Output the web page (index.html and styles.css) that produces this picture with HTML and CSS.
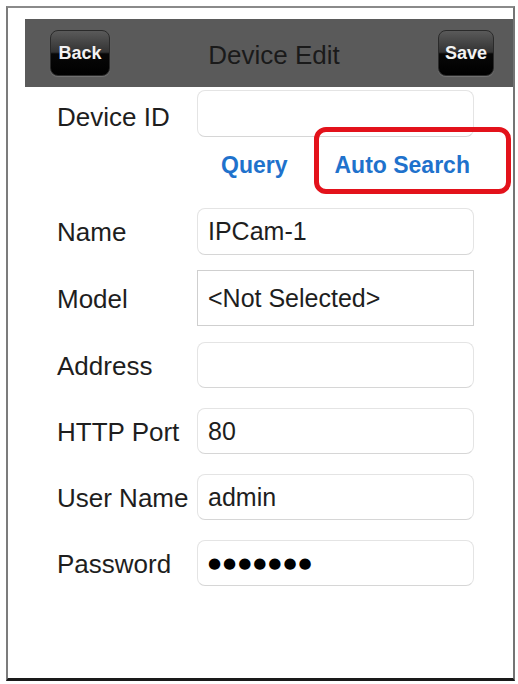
FILE: index.html
```html
<!DOCTYPE html>
<html lang="en">
<head>
  <meta charset="UTF-8">
  <meta name="viewport" content="width=device-width, initial-scale=1.0">
  <title>Device Edit</title>
  <link rel="stylesheet" href="styles.css">
</head>
<body>
  <div class="frame">
    <!-- top bar -->
    <div class="navbar">
      <button class="nav-btn">Back</button>
      <span class="nav-title">Device Edit</span>
      <button class="nav-btn">Save</button>
    </div>

    <div class="form">
      <div class="row row-first">
        <label for="devid">Device ID</label>
        <input class="field" id="devid" type="text" value="">
      </div>

      <div class="actions">
        <a class="link" href="#">Query</a>
        <a class="link link-marked" href="#">Auto Search</a>
      </div>

      <div class="row row-name">
        <label for="name">Name</label>
        <input class="field" id="name" type="text" value="IPCam-1">
      </div>
      <div class="row row-model">
        <label for="model">Model</label>
        <div class="field field-select" id="model">&lt;Not Selected&gt;</div>
      </div>
      <div class="row">
        <label for="addr">Address</label>
        <input class="field" id="addr" type="text" value="">
      </div>
      <div class="row">
        <label for="port">HTTP Port</label>
        <input class="field" id="port" type="text" value="80">
      </div>
      <div class="row">
        <label for="user">User Name</label>
        <input class="field" id="user" type="text" value="admin">
      </div>
      <div class="row">
        <label for="pass">Password</label>
        <div class="field field-pass" id="pass">●●●●●●●</div>
      </div>
    </div>
  </div>
</body>
</html>
```

FILE: styles.css
```css
* {
  box-sizing: border-box;
}
body {
  margin: 0;
  background-color: #fff;
  font-family: "Liberation Sans", Arial, sans-serif;
  color: #1e1e1e;
}
.frame {
  margin: 6px 3px 0 6px;
  height: 675px;
  border-top: 2px solid #8a8a8a;
  border-left: 2px solid #7c7c7c;
  border-right: 2px solid #747474;
  border-bottom: 3px solid #1a1a1a;
  background-color: #fff;
}
.navbar {
  margin: 11px 0 0 17px;
  height: 68px;
  background-color: #5a5a5a;
  display: flex;
  align-items: center;
  justify-content: space-between;
  padding: 0 19px 0 25px;
}
.nav-btn {
  height: 46px;
  padding: 0 6px;
  min-width: 53px;
  border: 1px solid #2a2a2a;
  border-radius: 8px;
  background: linear-gradient(#5a5a5a 0%, #333 48%, #080808 52%, #000 100%);
  color: #f2f2f2;
  font-family: "Liberation Sans", Arial, sans-serif;
  font-size: 18px;
  font-weight: bold;
  box-shadow: 0 1px 1px rgba(255, 255, 255, 0.15);
}
.nav-btn:first-child {
  width: 60px;
}
.nav-title {
  margin-top: 5px;
  font-size: 26px;
  color: #1a1a1a;
}
.form {
  padding-left: 49px;
}
.row {
  display: flex;
  align-items: center;
  height: 46px;
  margin-top: 20px;
}
.row-first {
  margin-top: 3px;
  height: 47px;
}
.row-first label {
  padding-top: 8px;
}
.row-name {
  margin-top: 0;
  height: 47px;
}
.row-model {
  margin-top: 15px;
  height: 56px;
  margin-bottom: -4px;
}
label {
  width: 140px;
  padding-top: 2px;
  font-size: 26px;
  color: #1e1e1e;
  flex: none;
}
.field {
  width: 277px;
  height: 100%;
  padding: 0 10px;
  border: 1px solid #e4e4e4;
  border-bottom-color: #d6d6d6;
  border-radius: 8px;
  background-color: #fff;
  font-family: "Liberation Sans", Arial, sans-serif;
  font-size: 25px;
  color: #1e1e1e;
  outline: none;
  display: flex;
  align-items: center;
}
.field-select {
  border: 1px solid #cfcfcf;
  border-radius: 0;
}
.field-pass {
  font-family: "DejaVu Sans", sans-serif;
  font-size: 15px;
  letter-spacing: 2px;
  color: #000;
}
.actions {
  height: 71px;
  padding: 14px 0 0 164px;
  display: flex;
  align-items: flex-start;
  gap: 47px;
  line-height: 28px;
}
.link {
  color: #1f72cc;
  font-size: 23px;
  font-weight: bold;
  text-decoration: none;
}
.link-marked {
  position: relative;
}
/* red highlight frame around Auto Search */
.link-marked::after {
  content: "";
  position: absolute;
  left: -20px;
  right: -41px;
  top: -24px;
  bottom: -15px;
  border: 5px solid #e3121b;
  border-radius: 12px;
}
```
